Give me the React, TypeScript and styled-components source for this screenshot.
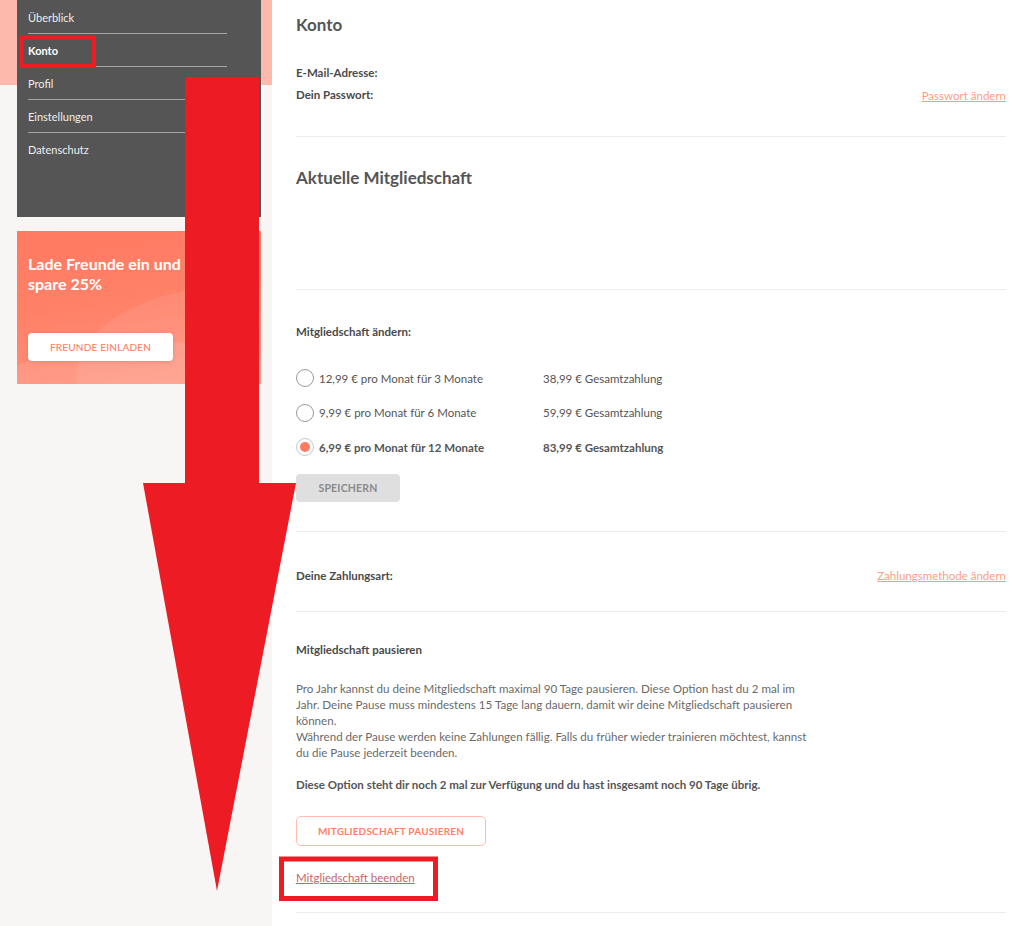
import React from "react";
import styled, { createGlobalStyle } from "styled-components";

const GlobalStyle = createGlobalStyle`
  html, body {
    margin: 0;
    padding: 0;
    background: #ffffff;
  }
  body {
    font-family: Lato, "Open Sans", sans-serif;
    color: #555;
  }
`;

const menuItems = ["Überblick", "Konto", "Profil", "Einstellungen", "Datenschutz"];

const plans = [
  { label: "12,99 € pro Monat für 3 Monate", total: "38,99 € Gesamtzahlung", checked: false },
  { label: "9,99 € pro Monat für 6 Monate", total: "59,99 € Gesamtzahlung", checked: false },
  { label: "6,99 € pro Monat für 12 Monate", total: "83,99 € Gesamtzahlung", checked: true },
];

const App: React.FC = () => {
  return (
    <Page>
      <GlobalStyle />
      <Aside>
        <SideNav>
          {menuItems.map((item, i) => (
            <NavItem key={item} $active={item === "Konto"} $last={i === menuItems.length - 1}>
              {item}
            </NavItem>
          ))}
        </SideNav>
        <PromoCard>
          <PromoTitle>Lade Freunde ein und spare 25%</PromoTitle>
          <PromoButton>FREUNDE EINLADEN</PromoButton>
        </PromoCard>
      </Aside>

      <Main>
        <Section $top={14} $bottom={30}>
          <Heading>Konto</Heading>
          <InfoRows>
            <InfoRow>
              <Label>E-Mail-Adresse:</Label>
            </InfoRow>
            <InfoRow>
              <Label>Dein Passwort:</Label>
              <TextLink>Passwort ändern</TextLink>
            </InfoRow>
          </InfoRows>
        </Section>

        <Section $top={30} $bottom={100}>
          <Heading>Aktuelle Mitgliedschaft</Heading>
        </Section>

        <Section $top={31} $bottom={29}>
          <Label>Mitgliedschaft ändern:</Label>
          <PlanList>
            {plans.map((p) => (
              <PlanRow key={p.label} $checked={p.checked}>
                <Radio $checked={p.checked} />
                <PlanLabel>{p.label}</PlanLabel>
                <PlanTotal>{p.total}</PlanTotal>
              </PlanRow>
            ))}
          </PlanList>
          <SaveButton>SPEICHERN</SaveButton>
        </Section>

        <Section $top={33} $bottom={24}>
          <InfoRow>
            <Label>Deine Zahlungsart:</Label>
            <TextLink>Zahlungsmethode ändern</TextLink>
          </InfoRow>
        </Section>

        <Section $top={27} $bottom={26}>
          <Label>Mitgliedschaft pausieren</Label>
          <Paragraph>
            Pro Jahr kannst du deine Mitgliedschaft maximal 90 Tage pausieren. Diese Option hast du 2 mal im
            Jahr. Deine Pause muss mindestens 15 Tage lang dauern, damit wir deine Mitgliedschaft pausieren
            können.
            <br />
            Während der Pause werden keine Zahlungen fällig. Falls du früher wieder trainieren möchtest, kannst
            du die Pause jederzeit beenden.
          </Paragraph>
          <Note>Diese Option steht dir noch 2 mal zur Verfügung und du hast insgesamt noch 90 Tage übrig.</Note>
          <OutlineButton>MITGLIEDSCHAFT PAUSIEREN</OutlineButton>
          <CancelLink>Mitgliedschaft beenden</CancelLink>
        </Section>
      </Main>

      <Annotations viewBox="0 0 1024 926" width="1024" height="926">
        <rect x="21.5" y="37.5" width="72.5" height="28.5" fill="none" stroke="#ed1c24" strokeWidth="4" />
        <rect x="281.5" y="859" width="154" height="39.5" fill="none" stroke="#ed1c24" strokeWidth="5" />
        <polygon
          points="185,77 259,77 259,483 296,483 217,891 143,483 185,483"
          fill="#ed1c24"
        />
      </Annotations>
    </Page>
  );
};

export default App;

const Page = styled.div`
  position: relative;
  display: flex;
  width: 1024px;
  min-height: 926px;
  overflow: hidden;
`;

const Aside = styled.aside`
  width: 272px;
  flex-shrink: 0;
  padding-left: 17px;
  box-sizing: border-box;
  background: linear-gradient(#fdb9ab 0, #fdb9ab 85px, #f8f6f4 85px);
`;

const SideNav = styled.nav`
  width: 244px;
  height: 217px;
  background: #555555;
  padding: 1px 34px 0 11px;
  box-sizing: border-box;
`;

const NavItem = styled.div<{ $active?: boolean; $last?: boolean }>`
  height: 33px;
  box-sizing: border-box;
  display: flex;
  align-items: center;
  font-size: 11px;
  color: ${(p) => (p.$active ? "#ffffff" : "#eeeeee")};
  font-weight: ${(p) => (p.$active ? 700 : 400)};
  border-bottom: ${(p) => (p.$last ? "none" : "1px solid #a5a5a5")};
`;

const PromoCard = styled.div`
  position: relative;
  margin-top: 14px;
  width: 244px;
  height: 153px;
  box-sizing: border-box;
  padding: 23px 11px 0;
  overflow: hidden;
  background: linear-gradient(170deg, #ff7a61 0%, #ff8168 45%, #ff9783 100%);

  &::before {
    content: "";
    position: absolute;
    left: 60px;
    top: 55px;
    width: 320px;
    height: 180px;
    border-radius: 50%;
    background: rgba(255, 255, 255, 0.08);
  }
  &::after {
    content: "";
    position: absolute;
    left: -40px;
    top: 110px;
    width: 340px;
    height: 140px;
    border-radius: 50%;
    background: rgba(255, 255, 255, 0.1);
  }
`;

const PromoTitle = styled.div`
  position: relative;
  z-index: 1;
  max-width: 190px;
  font-size: 16px;
  line-height: 20px;
  font-weight: 700;
  color: #ffffff;
`;

const PromoButton = styled.button`
  position: relative;
  z-index: 1;
  margin-top: 39px;
  width: 145px;
  height: 28px;
  border: none;
  border-radius: 4px;
  background: #ffffff;
  box-shadow: 0 1px 4px rgba(0, 0, 0, 0.12);
  font-family: Lato, sans-serif;
  font-size: 10px;
  font-weight: 500;
  letter-spacing: 0.2px;
  color: #ff7d64;
`;

const Main = styled.main`
  flex: 1;
  padding: 0 18px 0 24px;
  background: #ffffff;
`;

const Section = styled.section<{ $top: number; $bottom: number }>`
  padding: ${(p) => p.$top}px 0 ${(p) => p.$bottom}px;
  border-bottom: 1px solid #ececec;
`;

const Heading = styled.h2`
  margin: 0;
  font-size: 17px;
  line-height: 22px;
  font-weight: 700;
  color: #555;
`;

const InfoRows = styled.div`
  margin-top: 26px;
`;

const InfoRow = styled.div`
  display: flex;
  align-items: center;
  justify-content: space-between;
  height: 22px;
`;

const Label = styled.div`
  font-size: 11.5px;
  line-height: 22px;
  font-weight: 700;
  color: #4a4a4a;
`;

const TextLink = styled.a`
  font-size: 11.5px;
  color: #ff9b85;
  text-decoration: underline;
  cursor: pointer;
`;

const PlanList = styled.div`
  margin-top: 18px;
`;

const PlanRow = styled.label<{ $checked?: boolean }>`
  display: flex;
  align-items: center;
  height: 34.5px;
  font-size: 11.5px;
  color: #555;
  font-weight: ${(p) => (p.$checked ? 700 : 400)};
`;

const Radio = styled.span<{ $checked?: boolean }>`
  width: 16px;
  height: 16px;
  border-radius: 50%;
  border: 1px solid ${(p) => (p.$checked ? "#c8c8c8" : "#9a9a9a")};
  display: flex;
  align-items: center;
  justify-content: center;
  margin-right: 5px;
  flex-shrink: 0;

  &::after {
    content: "";
    display: ${(p) => (p.$checked ? "block" : "none")};
    width: 10px;
    height: 10px;
    border-radius: 50%;
    background: #ff7a62;
  }
`;

const PlanLabel = styled.span`
  width: 224px;
`;

const PlanTotal = styled.span``;

const SaveButton = styled.button`
  display: block;
  margin-top: 9px;
  width: 104px;
  height: 28px;
  border: none;
  border-radius: 4px;
  background: #dfdfdf;
  font-family: Lato, sans-serif;
  font-size: 10.5px;
  font-weight: 700;
  color: #8a8a8a;
  letter-spacing: 0.2px;
`;

const Paragraph = styled.p`
  margin: 20px 0 0;
  max-width: 512px;
  font-size: 11.6px;
  line-height: 16px;
  color: #6a6a6a;
  font-weight: 400;
`;

const Note = styled.p`
  margin: 16px 0 0;
  font-size: 11.5px;
  line-height: 16px;
  font-weight: 700;
  color: #555;
`;

const OutlineButton = styled.button`
  display: block;
  margin-top: 23px;
  width: 190px;
  height: 30px;
  border: 1px solid #ffbcad;
  border-radius: 5px;
  background: #ffffff;
  font-family: Lato, sans-serif;
  font-size: 10px;
  font-weight: 700;
  color: #ff7f66;
  letter-spacing: 0.2px;
`;

const CancelLink = styled.a`
  display: inline-block;
  margin-top: 24px;
  font-size: 11.5px;
  line-height: 16px;
  color: #c8626a;
  text-decoration: underline;
  cursor: pointer;
`;

const Annotations = styled.svg`
  position: absolute;
  left: 0;
  top: 0;
  pointer-events: none;
`;
